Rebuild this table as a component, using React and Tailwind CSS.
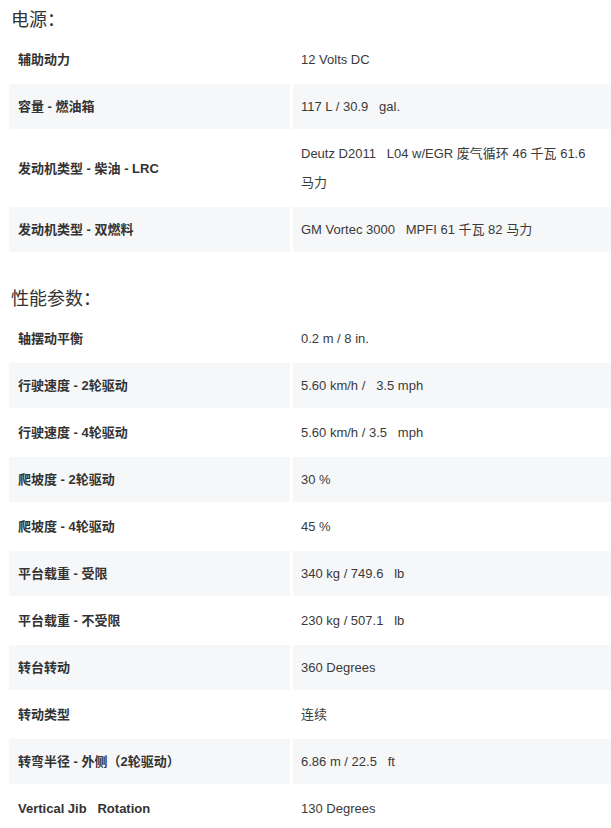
import React from "react";

const power = [
  ["辅助动力", "12 Volts DC"],
  ["容量 - 燃油箱", "117 L / 30.9\u00a0\u00a0\u00a0gal."],
  [
    "发动机类型 - 柴油 - LRC",
    <>
      Deutz D2011{"\u00a0\u00a0\u00a0"}L04 w/EGR 废气循环 46 千瓦 61.6{" "}
      <span className="whitespace-nowrap">马力</span>
    </>,
  ],
  ["发动机类型 - 双燃料", "GM Vortec 3000\u00a0\u00a0\u00a0MPFI 61 千瓦 82 马力"],
];

const perf = [
  ["轴摆动平衡", "0.2 m / 8 in."],
  ["行驶速度 - 2轮驱动", "5.60 km/h /\u00a0\u00a0\u00a03.5 mph"],
  ["行驶速度 - 4轮驱动", "5.60 km/h / 3.5\u00a0\u00a0\u00a0mph"],
  ["爬坡度 - 2轮驱动", "30 %"],
  ["爬坡度 - 4轮驱动", "45 %"],
  ["平台载重 - 受限", "340 kg / 749.6\u00a0\u00a0\u00a0lb"],
  ["平台载重 - 不受限", "230 kg / 507.1\u00a0\u00a0\u00a0lb"],
  ["转台转动", "360 Degrees"],
  ["转动类型", "连续"],
  ["转弯半径 - 外侧（2轮驱动）", "6.86 m / 22.5\u00a0\u00a0\u00a0ft"],
  ["Vertical Jib\u00a0\u00a0\u00a0Rotation", "130 Degrees"],
];

function Table({ rows }) {
  return (
    <div className="flex flex-col gap-[2px]">
      {rows.map(([k, v], i) => {
        const bg = i % 2 === 1 ? "bg-[#f6f7f9]" : "bg-white";
        return (
          <div key={i} className="flex gap-[3px]">
            <div
              className={
                "w-[281px] shrink-0 flex items-center px-[9px] py-[8px] min-h-[45px] font-bold text-[13px] leading-[29px] text-[#333] " +
                bg
              }
            >
              {k}
            </div>
            <div
              className={
                "flex-1 flex items-center px-[8px] py-[8px] min-h-[45px] text-[13px] leading-[29px] text-[#3a3a3a] " +
                bg
              }
            >
              <div>{v}</div>
            </div>
          </div>
        );
      })}
    </div>
  );
}

export default function App() {
  return (
    <div
      className="w-[611px] h-[828px] overflow-hidden bg-white pl-[9px]"
      style={{ fontFamily: '"Liberation Sans", Arial, "Noto Sans CJK SC", sans-serif' }}
    >
      <h2 className="pt-[8px] pb-[5px] pl-[2px] text-[18px] leading-[24px] text-[#333] font-normal">
        电源：
      </h2>
      <Table rows={power} />
      <h2 className="pt-[35px] pb-[5px] pl-[2px] text-[18px] leading-[24px] text-[#333] font-normal">
        性能参数：
      </h2>
      <Table rows={perf} />
    </div>
  );
}
